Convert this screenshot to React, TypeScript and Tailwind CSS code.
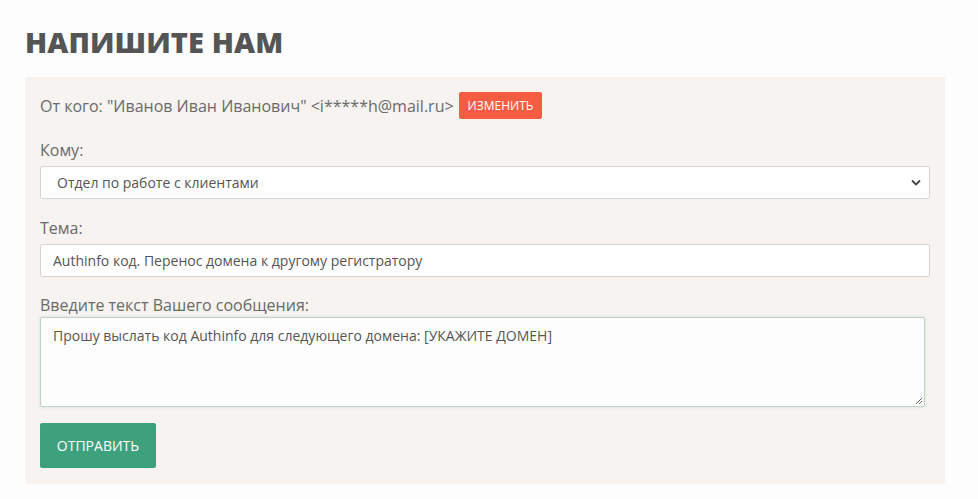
import React from "react";

export default function App() {
  return (
    <div className="min-h-[499px] w-[978px] bg-[#fdfdfd] pt-[24px] pl-[25px] font-['Open_Sans',sans-serif] text-[#6a6a6a]">
      <h1 className="h-[36px] text-[29px] font-extrabold leading-[36px] tracking-[0.1px] text-[#555555]">НАПИШИТЕ НАМ</h1>
      <div className="mt-[17px] w-[920px] bg-[#f6f3f0] px-[15px] pt-[15px] pb-[16px]">
        <div className="flex h-[27px] items-center text-[16px]">
          <span>От кого: "Иванов Иван Иванович" &lt;i*****h@mail.ru&gt;</span>
          <button className="ml-[5px] h-[27px] rounded-[2px] bg-[#f65c42] px-[9px] text-[12px] text-white">ИЗМЕНИТЬ</button>
        </div>
        <div className="mt-[19px] text-[16px] leading-[24px]">Кому:</div>
        <div className="mt-[4px] flex h-[33px] w-[890px] items-center justify-between rounded-[2px] border border-[#d6d3d0] bg-white pl-[16px] pr-[8px] text-[14px] text-[#555]">
          <span>Отдел по работе с клиентами</span>
          <svg width="10" height="7" viewBox="0 0 10 7"><path d="M1 1.5 L5 5.5 L9 1.5" fill="none" stroke="#444" strokeWidth="1.8" /></svg>
        </div>
        <div className="mt-[17px] text-[16px] leading-[24px]">Тема:</div>
        <div className="mt-[4px] flex h-[33px] w-[890px] items-center rounded-[2px] border border-[#d6d3d0] bg-white pl-[12px] text-[14px] text-[#555]">
          Authinfo код. Перенос домена к другому регистратору
        </div>
        <div className="mt-[16px] text-[16px] leading-[24px]">Введите текст Вашего сообщения:</div>
        <div className="relative h-[90px] w-[885px] rounded-[2px] border border-[#bfd3c8] bg-[#fdfdfd] px-[12px] pt-[7px] text-[14px] text-[#555] shadow-[0_0_3px_#cfe2d8]">
          Прошу выслать код Authinfo для следующего домена: [УКАЖИТЕ ДОМЕН]
          <svg className="absolute right-[1px] bottom-[1px]" width="9" height="9" viewBox="0 0 9 9"><path d="M8 2 L2 8 M8 5 L5 8" stroke="#666" strokeWidth="1" /></svg>
        </div>
        <button className="mt-[16px] h-[45px] w-[116px] rounded-[2px] bg-[#3ea17e] text-[14px] text-white">ОТПРАВИТЬ</button>
      </div>
    </div>
  );
}
